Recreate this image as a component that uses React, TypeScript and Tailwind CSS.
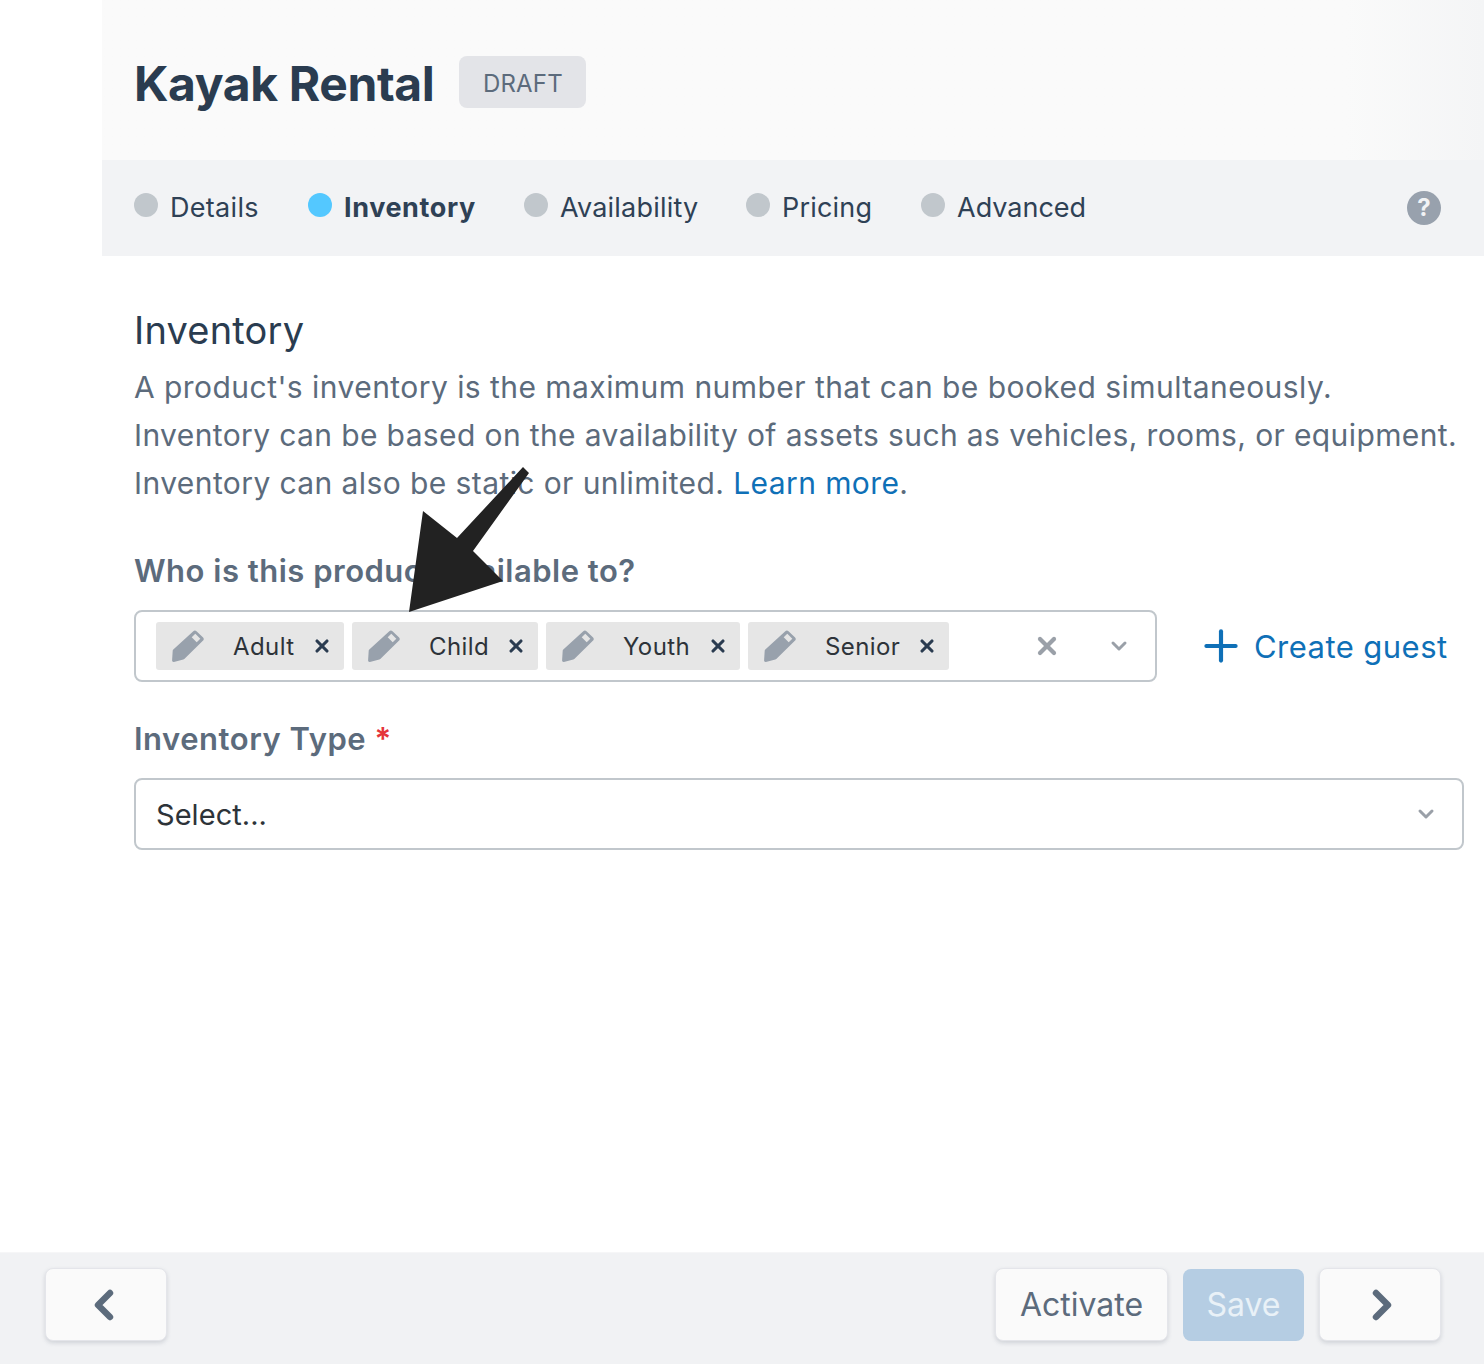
import React from 'react';
import { X, ChevronDown, ChevronLeft, ChevronRight, Plus } from 'lucide-react';

const font = { fontFamily: 'Inter, "Liberation Sans", sans-serif' };

const steps = [
    { label: 'Details', className: 'w-[174px] tracking-[0.3px]' },
    { label: 'Inventory', active: true, className: 'w-[216px] tracking-[0.6px]' },
    { label: 'Availability', className: 'w-[222px] tracking-[0.2px]' },
    { label: 'Pricing', className: 'w-[175px] tracking-[0.2px]' },
    { label: 'Advanced', className: 'w-[200px]' },
];

const guests = [
    { label: 'Adult', className: 'w-[188px]' },
    { label: 'Child', className: 'w-[186px]' },
    { label: 'Youth', className: 'w-[194px]' },
    { label: 'Senior', className: 'w-[201px]' },
];

function PencilIcon() {
    return (
        <svg width="34" height="34" viewBox="0 0 34 34" className="shrink-0">
            <path d="M22.3 2.2c.9-.9 2.3-.9 3.2 0l6.6 6.2c.9.9.9 2.3 0 3.2L13.3 30c-.3.3-.6.5-1 .6l-9.4 2.3c-1 .2-1.9-.6-1.8-1.6l.6-9.6c0-.5.3-.9.6-1.2z" fill="#98a1ac" />
            <path d="M29.3 9.7l-3.6 3.6-5-5 3.6-3.6z" fill="#e5e5e5" />
        </svg>
    );
}

function Tag({ label, className }: { label: string; className: string }) {
    return (
        <div className={`flex h-12 items-center rounded-[3px] bg-[#e6e6e6] pl-[15px] ${className}`}>
            <PencilIcon />
            <span className="ml-7 pt-[2px] text-[24px] tracking-[0.4px] text-[#2d3339]">{label}</span>
            <X className="ml-auto mr-[12px] h-5 w-5 text-[#2a3b50]" strokeWidth={3.8} />
        </div>
    );
}

function FooterButton({ children, className }: { children: React.ReactNode; className: string }) {
    return (
        <button className={`flex h-[73px] items-center justify-center rounded-lg border border-[#e4e5ea] bg-[#fafafa] text-[#5c6b7c] shadow-[0_2px_4px_rgba(90,100,120,0.22)] ${className}`}>
            {children}
        </button>
    );
}

export default function App() {
    return (
        <div className="relative flex h-[1364px] w-[1484px] flex-col overflow-hidden bg-white" style={font}>
            <div className="flex flex-1 flex-col pl-[102px]">
                {/* Title */}
                <div className="flex h-40 items-center bg-gradient-to-r from-[#fafafa] from-90% to-[#f4f5f6] pl-8 pt-1">
                    <h1 className="pt-1 text-[48px] font-bold tracking-[-0.4px] text-[#2a3c50]">Kayak Rental</h1>
                    <span className="ml-[25px] flex h-[52px] w-[127px] items-center justify-center rounded-lg bg-[#e3e4e8] pt-1 text-[24px] tracking-[0.2px] text-[#5c6b7c]">DRAFT</span>
                </div>

                {/* Steps */}
                <div className="flex h-24 items-center bg-[#f2f3f5] pl-8">
                    {steps.map(step => (
                        <div key={step.label} className={`flex items-center ${step.className}`}>
                            <span className={`mb-[6px] h-6 w-6 rounded-full ${step.active ? 'bg-[#54c8ff]' : 'bg-[#c1c7cc]'}`}></span>
                            <span className={`ml-3 text-[27px] text-[#2f4155] ${step.active ? 'font-bold' : ''}`}>{step.label}</span>
                        </div>
                    ))}
                    <div className="ml-auto mr-[43px] flex h-[34px] w-[34px] items-center justify-center rounded-full bg-[#98a1ad] text-[24px] font-bold text-[#f2f3f5]">?</div>
                </div>

                {/* Content */}
                <div className="pl-8 pt-[49px]">
                    <h2 className="text-[38px] leading-[50px] tracking-[0.2px] text-[#2a3c50]">Inventory</h2>
                    <div className="mt-2 text-[30px] leading-[48px] text-[#5c6b7c]">
                        <p className="tracking-[0.45px]">A product's inventory is the maximum number that can be booked simultaneously.</p>
                        <p className="tracking-[0.38px]">Inventory can be based on the availability of assets such as vehicles, rooms, or equipment.</p>
                        <p className="tracking-[0.41px]">
                            Inventory can also be static or unlimited. <span className="text-[#0f70b7]">Learn more</span>.
                        </p>
                    </div>

                    <div className="mt-[44px] text-[31px] font-semibold leading-10 tracking-[0.5px] text-[#5c6b7c]">Who is this product available to?</div>
                    <div className="mt-[19px] flex items-center">
                        <div className="flex h-[72px] w-[1023px] items-center rounded-lg border-2 border-[#c1c7cc] bg-white pl-5">
                            <div className="flex gap-2">
                                {guests.map(guest => (
                                    <Tag key={guest.label} label={guest.label} className={guest.className} />
                                ))}
                            </div>
                            <X className="ml-[84px] h-7 w-7 text-[#9aa0a8]" strokeWidth={3.6} />
                            <ChevronDown className="ml-[46px] h-6 w-6 text-[#9aa0a8]" strokeWidth={3} />
                        </div>
                        <div className="ml-[39px] flex items-center text-[#0f70b7]">
                            <Plus className="h-[50px] w-[50px]" strokeWidth={2} />
                            <span className="ml-[8px] pt-[2px] text-[31px] tracking-[0.45px]">Create guest</span>
                        </div>
                    </div>

                    <div className="mt-[37px] text-[31px] font-semibold leading-10 tracking-[0.53px] text-[#5c6b7c]">
                        Inventory Type <span className="text-[#e5343a]">*</span>
                    </div>
                    <div className="mt-[19px] flex h-[72px] w-[1330px] items-center rounded-lg border-2 border-[#c1c7cc] bg-white pl-5 pr-[24px]">
                        <span className="pt-[2px] text-[29px] tracking-[0.05px] text-[#2d3339]">Select...</span>
                        <ChevronDown className="ml-auto h-6 w-6 text-[#9aa0a8]" strokeWidth={3} />
                    </div>
                </div>
            </div>

            {/* Footer */}
            <div className="flex h-28 items-start border-t border-[#f6f6f7] bg-[#f1f2f4] pl-[45px] pr-[43px] pt-[15px]">
                <FooterButton className="w-[122px]">
                    <ChevronLeft className="mr-1 h-12 w-12" strokeWidth={3.2} />
                </FooterButton>
                <div className="ml-auto flex gap-[15px]">
                    <FooterButton className="w-[173px] text-[32px]">Activate</FooterButton>
                    <button className="mt-px flex h-[72px] w-[121px] items-center justify-center rounded-lg bg-[#b5cde3] text-[32px] text-[#e9f1f7]">Save</button>
                    <FooterButton className="w-[122px]">
                        <ChevronRight className="ml-1 h-12 w-12" strokeWidth={3.2} />
                    </FooterButton>
                </div>
            </div>

            {/* Annotation arrow over the page */}
            <svg className="pointer-events-none absolute left-[400px] top-[460px]" width="140" height="160" viewBox="400 460 140 160">
                <polygon points="523,467 529,473 473,551 503,581 409,612 423,511 457,538" fill="#222222" />
            </svg>
        </div>
    );
}
